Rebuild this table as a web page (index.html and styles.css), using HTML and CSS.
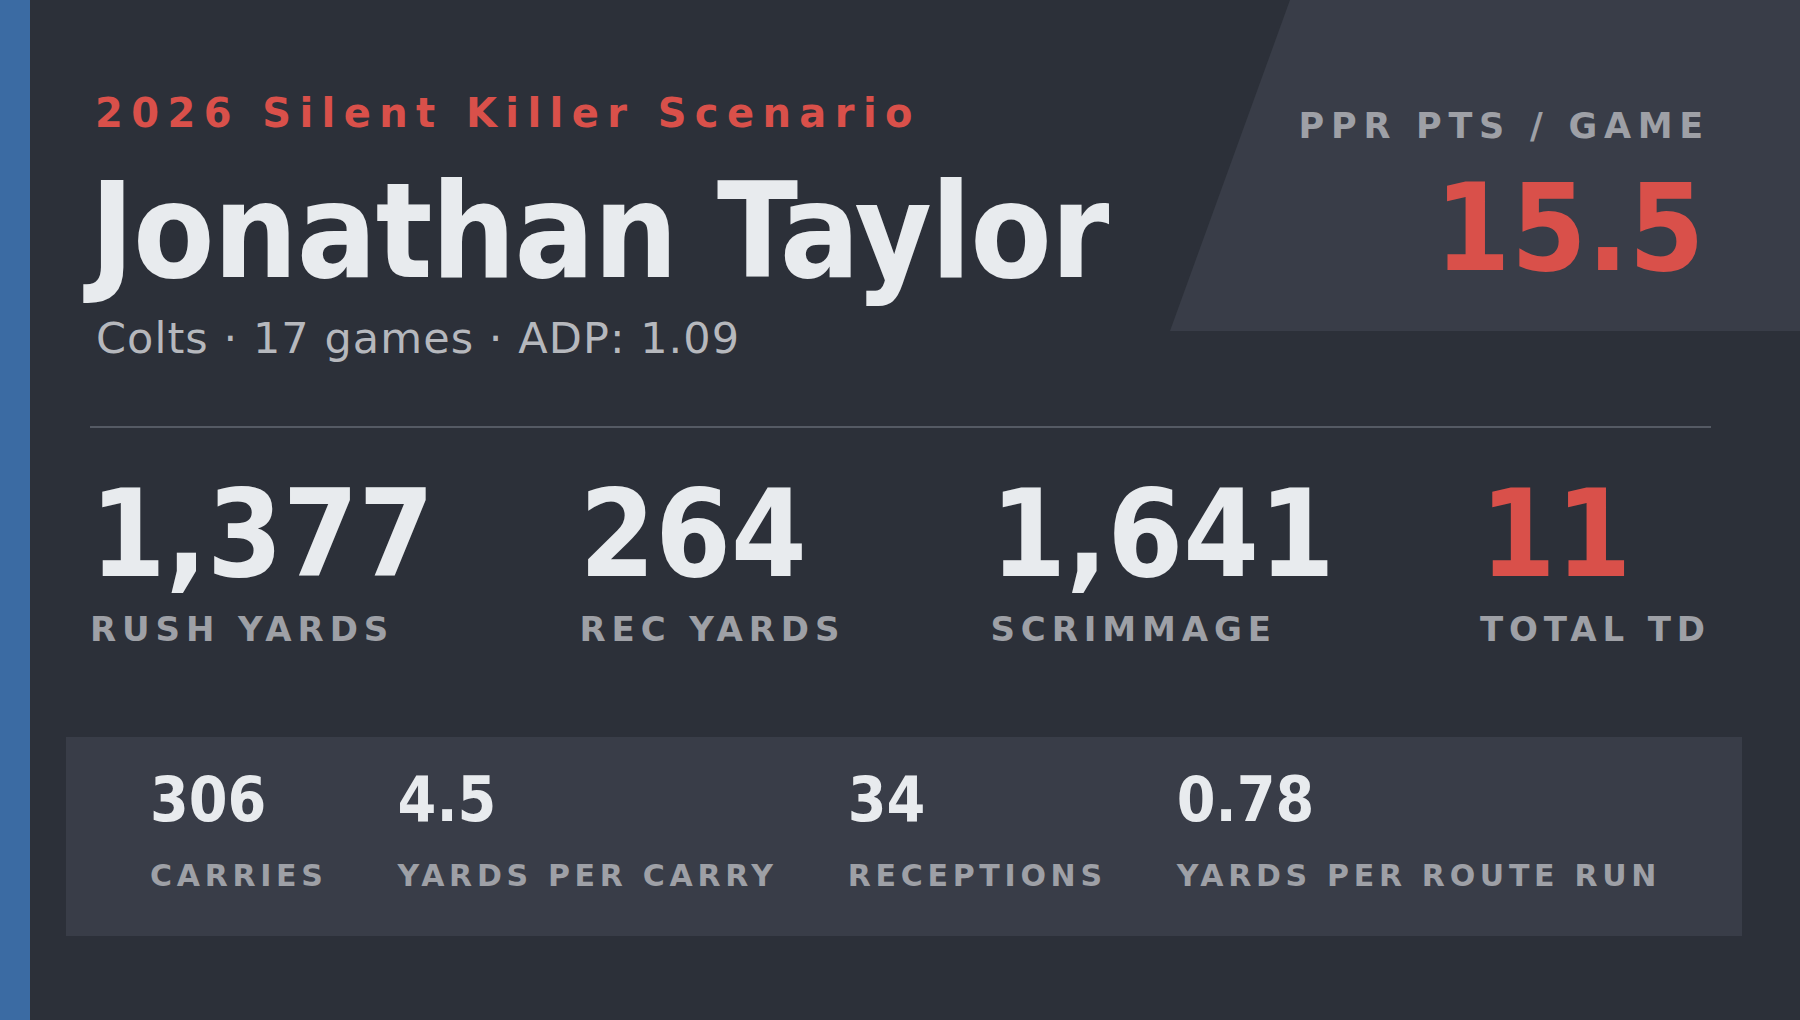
FILE: index.html
```html
<!DOCTYPE html>
<html lang="en">
<head>
<meta charset="utf-8">
<title>Jonathan Taylor — 2026 Silent Killer Scenario</title>
<link rel="stylesheet" href="styles.css">
</head>
<body>
<div class="page">
  <div class="accent"></div>
  <main class="card">
    <header class="hero">
      <div class="identity">
        <p class="eyebrow">2026 Silent Killer Scenario</p>
        <h1 class="name">Jonathan Taylor</h1>
        <p class="meta">Colts · 17 games · ADP: 1.09</p>
      </div>
      <aside class="ppg">
        <div class="ppg-label">PPR PTS / GAME</div>
        <div class="ppg-value">15.5</div>
      </aside>
    </header>

    <hr class="divider">

    <section class="stats">
      <div class="stat">
        <div class="stat-value">1,377</div>
        <div class="stat-label">RUSH YARDS</div>
      </div>
      <div class="stat">
        <div class="stat-value">264</div>
        <div class="stat-label">REC YARDS</div>
      </div>
      <div class="stat">
        <div class="stat-value">1,641</div>
        <div class="stat-label">SCRIMMAGE</div>
      </div>
      <div class="stat">
        <div class="stat-value accent-text">11</div>
        <div class="stat-label">TOTAL TD</div>
      </div>
    </section>

    <section class="details">
      <div class="detail">
        <div class="detail-value">306</div>
        <div class="detail-label">CARRIES</div>
      </div>
      <div class="detail">
        <div class="detail-value">4.5</div>
        <div class="detail-label">YARDS PER CARRY</div>
      </div>
      <div class="detail">
        <div class="detail-value">34</div>
        <div class="detail-label">RECEPTIONS</div>
      </div>
      <div class="detail">
        <div class="detail-value">0.78</div>
        <div class="detail-label">YARDS PER ROUTE RUN</div>
      </div>
    </section>
  </main>
</div>
</body>
</html>
```

FILE: styles.css
```css
* {
  box-sizing: border-box;
  margin: 0;
  padding: 0;
}

html, body {
  width: 1800px;
  height: 1020px;
  overflow: hidden;
}

body {
  background: #2c3039;
  font-family: "DejaVu Sans", "Noto Sans", sans-serif;
  color: #e8ebee;
}

/* display figures use the condensed cut of the same family */
.name,
.ppg-value,
.stat-value,
.detail-value {
  font-family: "DejaVu Sans Condensed", "DejaVu Sans", sans-serif;
  font-stretch: condensed;
  font-weight: bold;
  line-height: 1;
}

.page {
  display: flex;
  height: 1020px;
}

.accent {
  width: 30px;
  flex-shrink: 0;
  background: #3b6ba3;
}

.card {
  flex: 1;
  padding: 0 89px 0 60px;
}

/* ---------- hero ---------- */
.hero {
  display: flex;
  justify-content: space-between;
  margin-right: -89px;
}

.identity {
  padding-top: 93px;
}

.eyebrow {
  margin-left: 5px;
  font-size: 40px;
  line-height: 1;
  font-weight: bold;
  letter-spacing: 8.4px;
  color: #d9504a;
}

.name {
  margin-top: 32px;
  font-size: 132px;
  letter-spacing: -1.2px;
  color: #e8ebee;
}

.meta {
  margin-top: 20px;
  margin-left: 6px;
  font-size: 43px;
  line-height: 1;
  font-weight: normal;
  letter-spacing: 1.05px;
  color: #b6b8bd;
}

.ppg {
  width: 630px;
  height: 331px;
  flex-shrink: 0;
  background: #393d48;
  clip-path: polygon(120px 0, 100% 0, 100% 100%, 0 100%);
  padding: 109px 90px 0 0;
  display: flex;
  flex-direction: column;
  align-items: flex-end;
}

.ppg-label {
  font-size: 35px;
  line-height: 1;
  font-weight: bold;
  letter-spacing: 6.75px;
  color: #9ea0a6;
}

.ppg-value {
  margin-top: 24px;
  margin-right: 5px;
  font-size: 121px;
  letter-spacing: 0.4px;
  color: #d9504a;
}

/* ---------- divider ---------- */
.divider {
  border: 0;
  height: 2px;
  margin-top: 66px;
  background: #555a64;
}

/* ---------- headline stats ---------- */
.stats {
  display: flex;
  justify-content: space-between;
  margin-top: 46px;
}

.stat {
  display: flex;
  flex-direction: column;
}

.stat-value {
  font-size: 121px;
  letter-spacing: 0;
  color: #e8ebee;
}

.stat-value.accent-text {
  color: #d9504a;
}

.stat-label {
  margin-top: 17px;
  font-size: 34px;
  line-height: 1;
  font-weight: bold;
  letter-spacing: 5.9px;
  color: #9ea0a6;
}

/* ---------- detail panel ---------- */
.details {
  margin: 91px -31px 0 -24px;
  padding: 32px 0 45px 84px;
  background: #393d48;
  display: flex;
  gap: 70px;
}

.detail {
  display: flex;
  flex-direction: column;
}

.detail-value {
  font-size: 62px;
  letter-spacing: 0;
  color: #e8ebee;
}

.detail-label {
  margin-top: 30px;
  font-size: 30px;
  line-height: 1;
  font-weight: bold;
  letter-spacing: 4.7px;
  color: #9ea0a6;
}
```
